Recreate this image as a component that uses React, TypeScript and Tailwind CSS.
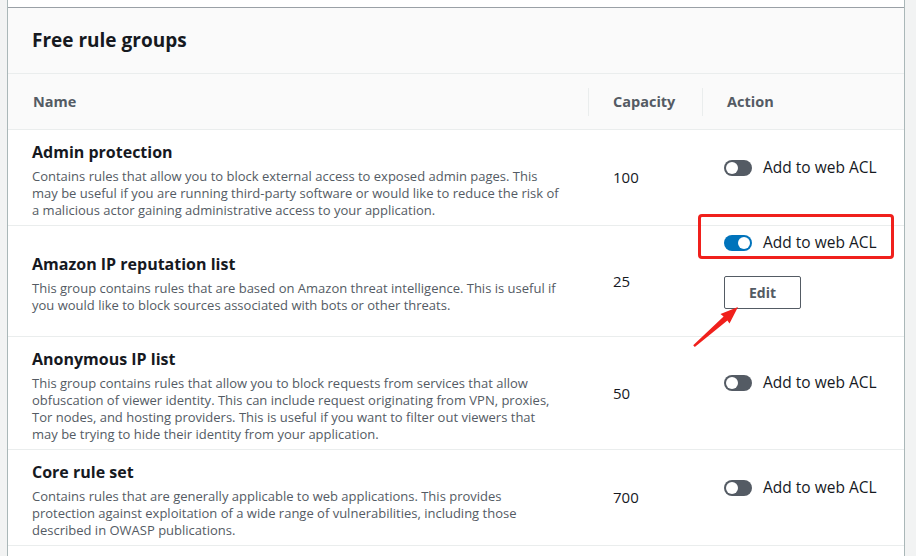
import React from "react";

type Rule = {
  name: string;
  lines: string[];
  capacity: number;
  enabled: boolean;
};

const RULES: Rule[] = [
  {
    name: "Admin protection",
    lines: [
      "Contains rules that allow you to block external access to exposed admin pages. This",
      "may be useful if you are running third-party software or would like to reduce the risk of",
      "a malicious actor gaining administrative access to your application.",
    ],
    capacity: 100,
    enabled: false,
  },
  {
    name: "Amazon IP reputation list",
    lines: [
      "This group contains rules that are based on Amazon threat intelligence. This is useful if",
      "you would like to block sources associated with bots or other threats.",
    ],
    capacity: 25,
    enabled: true,
  },
  {
    name: "Anonymous IP list",
    lines: [
      "This group contains rules that allow you to block requests from services that allow",
      "obfuscation of viewer identity. This can include request originating from VPN, proxies,",
      "Tor nodes, and hosting providers. This is useful if you want to filter out viewers that",
      "may be trying to hide their identity from your application.",
    ],
    capacity: 50,
    enabled: false,
  },
  {
    name: "Core rule set",
    lines: [
      "Contains rules that are generally applicable to web applications. This provides",
      "protection against exploitation of a wide range of vulnerabilities, including those",
      "described in OWASP publications.",
    ],
    capacity: 700,
    enabled: false,
  },
];

function Toggle({ on }: { on: boolean }) {
  return (
    <span
      className={`relative inline-block h-[16px] w-[28px] shrink-0 rounded-full ${on ? "bg-[#0073bb]" : "bg-[#545b64]"}`}
    >
      <span
        className={`absolute top-[2px] size-[12px] rounded-full bg-white ${on ? "left-[14px]" : "left-[2px]"}`}
      />
    </span>
  );
}

export default function App() {
  return (
    <div
      className="relative h-[556px] w-[916px] overflow-hidden bg-[#f2f3f3]"
      style={{ fontFamily: '"Open Sans", "Liberation Sans", Arial, sans-serif' }}
    >
      <div className="ml-[7px] h-full w-[898px] border-x border-[#aab7b8] bg-white">
        {/* previous panel edge */}
        <div className="h-[8px] border-b border-[#9aa0a6] bg-white" />

        {/* Header */}
        <div className="flex h-[66px] items-center border-b border-[#eaeded] bg-[#fafafa] px-6">
          <h2 className="text-[19px] font-bold text-[#16191f]">Free rule groups</h2>
        </div>

        {/* Column headers */}
        <div className="flex h-[56px] items-center border-b border-[#eaeded] bg-[#fafafa] text-[14.5px] font-bold text-[#545b64]">
          <div className="w-[580px] pl-[25px]">Name</div>
          <div className="flex h-[28px] w-[114px] items-center border-l border-[#eaeded] pl-6">Capacity</div>
          <div className="flex h-[28px] flex-1 items-center border-l border-[#eaeded] pl-6">Action</div>
        </div>

        {/* Rows */}
        {RULES.map((r) => (
          <div key={r.name} className="flex border-b border-[#eaeded]">
            <div className="flex w-[580px] flex-col justify-center pb-[6px] pl-6 pt-[11px]">
              <div className="text-[16px] font-bold leading-[22px] text-[#16191f]">{r.name}</div>
              <div className="mt-[5px] whitespace-nowrap text-[13px] leading-[17px] text-[#545b64]">
                {r.lines.map((l) => (
                  <div key={l}>{l}</div>
                ))}
              </div>
            </div>
            <div className="flex w-[114px] items-center pl-[25px] text-[15px] text-[#16191f]">{r.capacity}</div>
            <div className="flex flex-1 flex-col justify-center pb-[7px] pl-[22px] pt-[7px]">
              <div className="flex h-[20px] items-center gap-[11px] text-[15.5px] text-[#16191f]">
                <Toggle on={r.enabled} />
                <span>Add to web ACL</span>
              </div>
              {r.enabled && (
                <button className="mt-[23px] h-[33px] w-[77px] rounded-[2px] border border-[#545b64] bg-white text-[14px] font-bold text-[#545b64]">
                  Edit
                </button>
              )}
              <div className="h-[20px]" />
            </div>
          </div>
        ))}
      </div>

      {/* annotation: red highlight box */}
      <div className="absolute left-[698px] top-[214px] h-[45px] w-[196px] rounded-[4px] border-[3px] border-[#f0201c]" />

      {/* annotation: arrow */}
      <svg className="absolute left-[692px] top-[304px]" width="50" height="46" viewBox="0 0 50 46">
        <polygon
          points="46,3 37.5,19.5 35.4,16.6 2.8,43 1.2,41.2 31.6,12.4 28.5,10"
          fill="#f0201c"
        />
      </svg>
    </div>
  );
}
